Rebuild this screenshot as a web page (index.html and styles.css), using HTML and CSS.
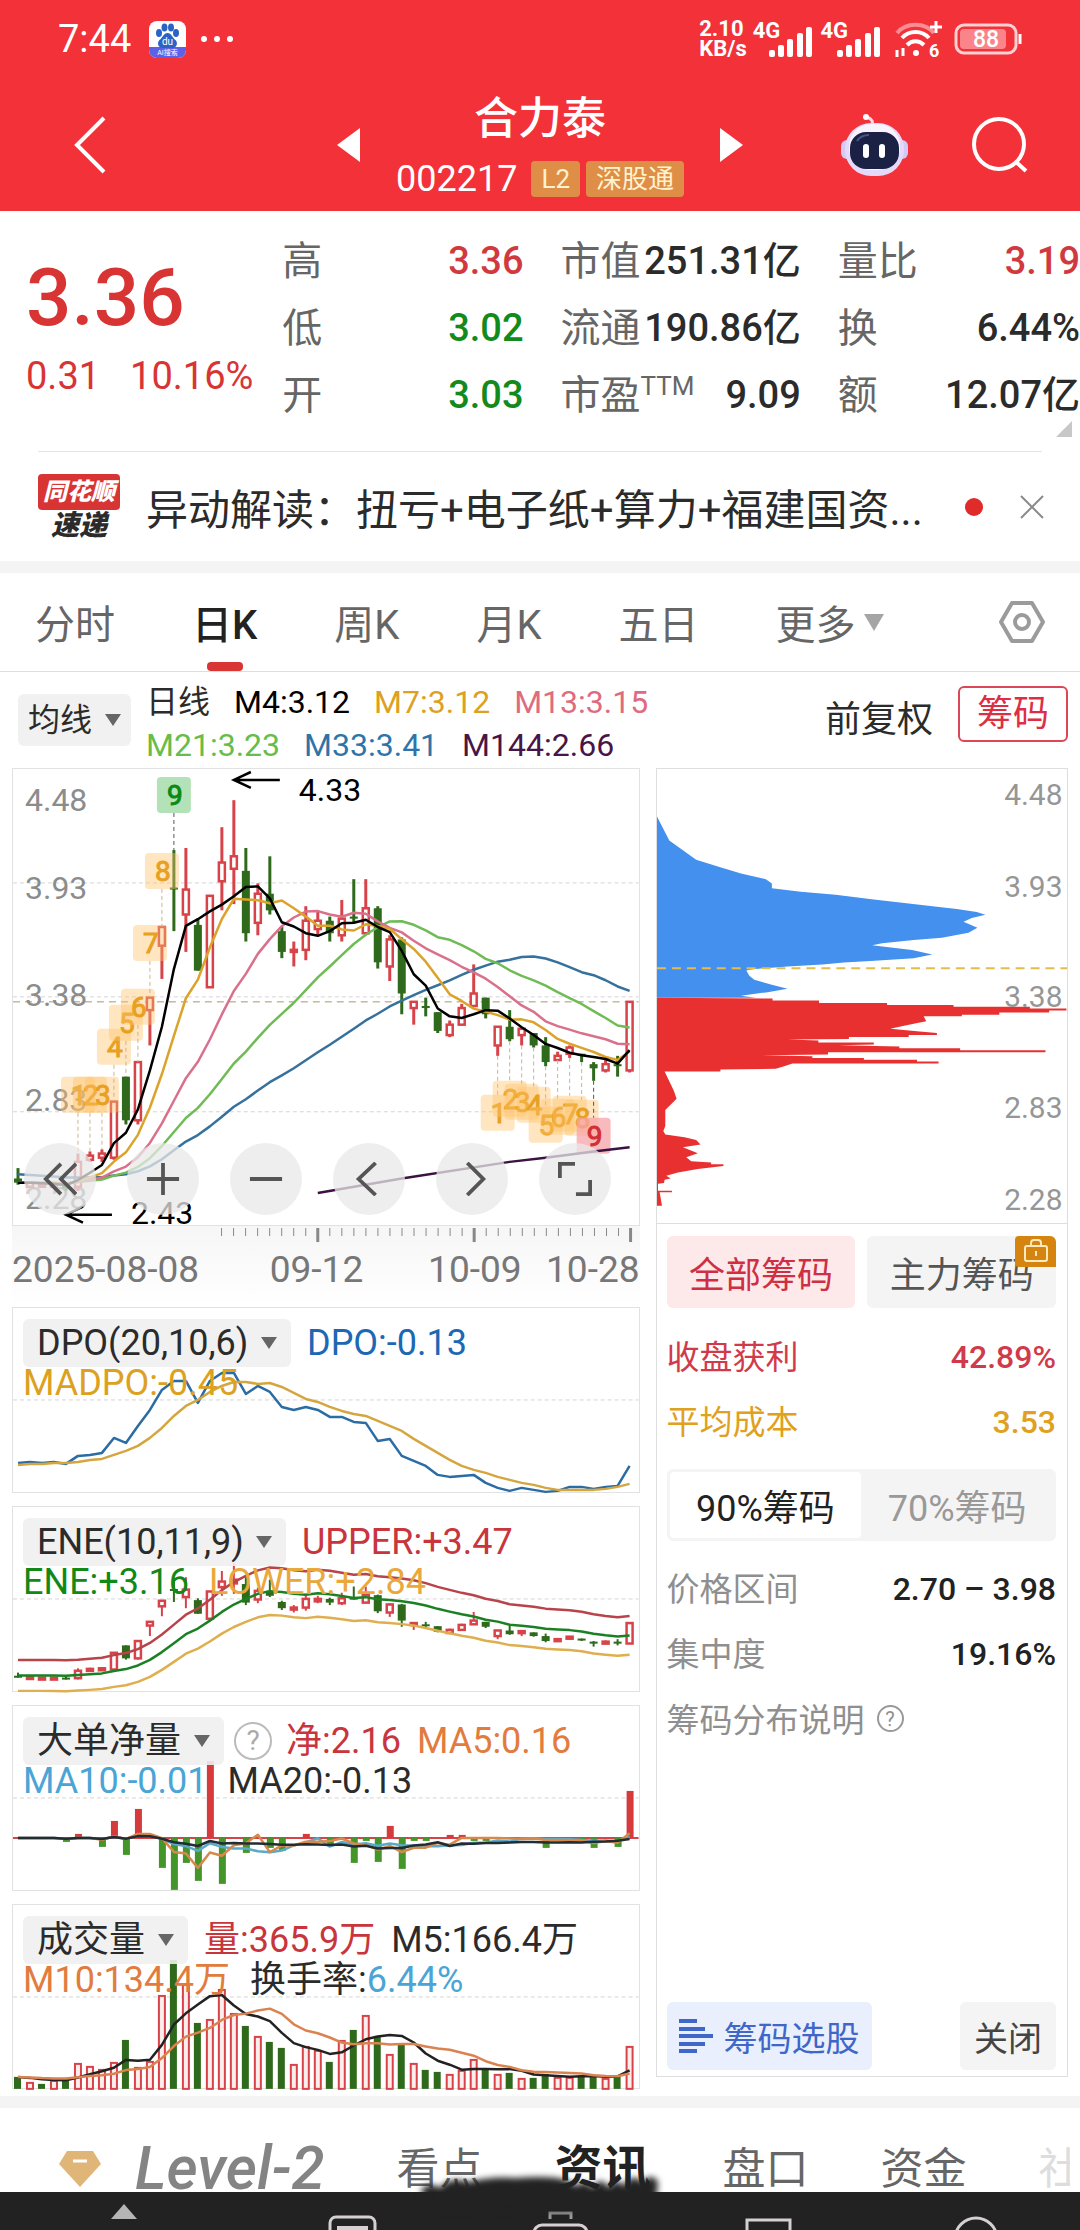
FILE: index.html
```html
<!DOCTYPE html>
<html lang="zh-CN">
<head>
    <meta charset="UTF-8">
    <meta name="viewport" content="width=device-width, initial-scale=1.0">
    <title>合力泰 002217</title>
    <link rel="stylesheet" href="styles.css">
</head>
<body>

<header class="header">
    <div class="status">
        <span class="time">7:44</span>
        <svg class="app-icon" width="37" height="37" viewBox="0 0 37 37">
            <rect width="37" height="37" rx="8" fill="#fff"/>
            <path d="M0 26h37v3a8 8 0 0 1-8 8H8a8 8 0 0 1-8-8z" fill="#5b62e8"/>
            <g fill="#2a63c4">
                <ellipse cx="10" cy="12" rx="3" ry="4"/>
                <ellipse cx="15.500" cy="6.500" rx="3" ry="4"/>
                <ellipse cx="22" cy="6.500" rx="3" ry="4"/>
                <ellipse cx="27" cy="12" rx="3" ry="4"/>
                <path d="M18.500 12c4 0 5 5 8 7 3 3 1 8-3 8h-10c-4 0-6-5-3-8 3-2 4-7 8-7z"/>
            </g>
            <text x="18.500" y="24" font-size="10" fill="#fff" text-anchor="middle">du</text>
            <text x="18.500" y="34" font-size="7" fill="#fff" text-anchor="middle">AI搜索</text>
        </svg>
        <svg width="34" height="8" viewBox="0 0 34 8" fill="#fff"><circle cx="4" cy="4" r="3"/><circle cx="17" cy="4" r="3"/><circle cx="30" cy="4" r="3"/></svg>
        <span class="speed">2.10<br>KB/s</span>
        <span class="signal"><i>4G</i>
            <svg width="46" height="32" viewBox="0 0 46 32" fill="#fff"><rect x="1" y="25" width="6" height="7" rx="2"/><rect x="10" y="20" width="6" height="12" rx="2"/><rect x="19" y="14" width="6" height="18" rx="2"/><rect x="29" y="8" width="6" height="24" rx="2"/><rect x="38" y="2" width="6" height="30" rx="2"/></svg>
        </span>
        <span class="signal"><i>4G</i>
            <svg width="46" height="32" viewBox="0 0 46 32" fill="#fff"><rect x="1" y="25" width="6" height="7" rx="2"/><rect x="10" y="20" width="6" height="12" rx="2"/><rect x="19" y="14" width="6" height="18" rx="2"/><rect x="29" y="8" width="6" height="24" rx="2"/><rect x="38" y="2" width="6" height="30" rx="2"/></svg>
        </span>
        <svg class="wifi" width="48" height="38" viewBox="0 0 48 38" fill="none" stroke="#fff" stroke-width="4">
            <path d="M3 13c9-11 28-11 37 0" opacity=".45"/>
            <path d="M8 18c7-8 20-8 27 0M13 25c5-5 12-5 17 0"/>
            <circle cx="22" cy="33" r="3" fill="#fff" stroke="none"/>
            <path d="M42 1v12M36 7h12" stroke-width="3"/>
            <path d="M3 30v7M9 28v8" stroke-width="3"/>
            <text x="35" y="37" font-size="18" font-weight="700" fill="#fff" stroke="none">6</text>
        </svg>
        <svg width="70" height="32" viewBox="0 0 70 32">
            <rect x="2" y="2" width="60" height="28" rx="8" fill="none" stroke="#fbd0d2" stroke-width="3"/>
            <rect x="6" y="6" width="46" height="20" rx="4" fill="#f9858a"/>
            <path d="M66 11v10" stroke="#fff" stroke-width="3"/>
            <text x="32" y="24" font-size="23" font-weight="500" fill="#fff" text-anchor="middle">88</text>
        </svg>
    </div>
    <nav class="navbar">
        <div class="side">
            <button class="icon-btn" aria-label="返回">
                <svg width="32" height="58" viewBox="0 0 32 58" fill="none" stroke="#fff" stroke-width="4"><path d="M30 2 3 29l27 27"/></svg>
            </button>
        </div>
        <button class="icon-btn" aria-label="上一只"><svg width="23" height="34" viewBox="0 0 23 34"><path d="M23 0v34L0 17z" fill="#fff"/></svg></button>
        <div class="stock">
            <h1>合力泰</h1>
            <p><span>002217</span><em>L2</em><em>深股通</em></p>
        </div>
        <button class="icon-btn" aria-label="下一只"><svg width="23" height="34" viewBox="0 0 23 34"><path d="M0 0v34l23-17z" fill="#fff"/></svg></button>
        <div class="side side-right">
            <button class="icon-btn" aria-label="智能助手">
                <svg width="67" height="64" viewBox="0 0 67 64">
                    <path d="M30 12c3-3 1-6-4-8" fill="none" stroke="#f3d5ee" stroke-width="3"/>
                    <circle cx="25" cy="4" r="3" fill="#fff"/>
                    <rect x="0" y="27" width="12" height="19" rx="6" fill="#d5c8f5"/>
                    <rect x="55" y="27" width="12" height="19" rx="6" fill="#d5c8f5"/>
                    <rect x="4" y="10" width="59" height="53" rx="26" fill="#e5d9fa"/>
                    <rect x="8" y="11" width="51" height="46" rx="22" fill="#f7f3ff"/>
                    <rect x="9" y="19" width="49" height="37" rx="16" fill="#1b2145"/>
                    <path d="M16 28q4-6 12-6" fill="none" stroke="#4a5585" stroke-width="2"/>
                    <rect x="22" y="31" width="6" height="14" rx="3" fill="#fff"/>
                    <rect x="38" y="31" width="6" height="14" rx="3" fill="#fff"/>
                </svg>
            </button>
            <button class="icon-btn" aria-label="搜索">
                <svg width="56" height="56" viewBox="0 0 56 56" fill="none" stroke="#fff" stroke-width="4"><circle cx="27" cy="27" r="25"/><path d="m43 44 11 10"/></svg>
            </button>
        </div>
    </nav>
</header>

<section class="quote">
    <div class="price">
        <strong>3.36</strong>
        <p><span>0.31</span><span>10.16%</span></p>
    </div>
    <dl>
        <div><dt>高</dt><dd class="up">3.36</dd></div>
        <div><dt>低</dt><dd class="down">3.02</dd></div>
        <div><dt>开</dt><dd class="down">3.03</dd></div>
    </dl>
    <dl>
        <div><dt>市值</dt><dd>251.31亿</dd></div>
        <div><dt>流通</dt><dd>190.86亿</dd></div>
        <div><dt>市盈<sup>TTM</sup></dt><dd>9.09</dd></div>
    </dl>
    <dl>
        <div><dt>量比</dt><dd class="up">3.19</dd></div>
        <div><dt>换</dt><dd>6.44%</dd></div>
        <div><dt>额</dt><dd>12.07亿</dd></div>
    </dl>
</section>

<section class="news">
    <div class="news-logo"><b>同花顺</b><i>速递</i></div>
    <a href="#news">异动解读：扭亏+电子纸+算力+福建国资...</a>
    <span class="dot"></span>
    <button class="icon-btn" aria-label="关闭提示">
        <svg width="24" height="24" viewBox="0 0 24 24" stroke="#8a8a8a" stroke-width="2"><path d="m1 1 22 22M23 1 1 23"/></svg>
    </button>
</section>

<nav class="periods">
    <button>分时</button>
    <button class="active">日K</button>
    <button>周K</button>
    <button>月K</button>
    <button>五日</button>
    <button class="more">更多</button>
    <button class="settings" aria-label="设置">
        <svg width="46" height="42" viewBox="0 0 46 42" fill="none" stroke="#9b9b9b" stroke-width="4" stroke-linejoin="round"><path d="M13 2h20l11 19-11 19H13L2 21z"/><circle cx="23" cy="21" r="7"/></svg>
    </button>
</nav>

<div class="averages">
    <label class="picker small"><select aria-label="主图指标"><option>均线</option></select></label>
    <div class="legend">
        <p><span class="c-ink">日线</span><span class="c-black">M4:3.12</span><span class="c-gold">M7:3.12</span><span class="c-pink">M13:3.15</span></p>
        <p><span class="c-lime">M21:3.23</span><span class="c-blue">M33:3.41</span><span class="c-plum">M144:2.66</span></p>
    </div>
    <button class="adjust">前复权</button>
    <button class="chips-toggle">筹码</button>
</div>

<main class="board">
    <div class="charts">
        <div class="panel kline">
            <svg id="kline" viewBox="0 0 626 456"></svg>
            <div class="tools">
                <button aria-label="最左"><svg viewBox="0 0 36 36"><path d="M19 2 3 18l16 16M35 2 19 18l16 16"/></svg></button>
                <button aria-label="放大"><svg viewBox="0 0 36 36"><path d="M18 1v34M1 18h34"/></svg></button>
                <button aria-label="缩小"><svg viewBox="0 0 36 36"><path d="M1 18h34"/></svg></button>
                <button aria-label="左移"><svg viewBox="0 0 36 36"><path d="M25 1 7 18l18 17"/></svg></button>
                <button aria-label="右移"><svg viewBox="0 0 36 36"><path d="m13 1 17 17-17 17"/></svg></button>
                <button aria-label="全屏"><svg viewBox="0 0 36 36"><path d="M2 17V2h16M34 19v15H19"/></svg></button>
            </div>
        </div>
        <svg id="axis" class="axis" viewBox="0 0 626 81"></svg>

        <div class="panel sub">
            <svg id="dpo" viewBox="0 0 626 184"></svg>
            <div class="legend">
                <p><label class="picker"><select aria-label="副图一指标"><option>DPO(20,10,6)</option></select></label><span class="c-azure">DPO:-0.13</span></p>
                <p><span class="c-gold">MADPO:-0.45</span></p>
            </div>
        </div>
        <div class="panel sub">
            <svg id="ene" viewBox="0 0 626 184"></svg>
            <div class="legend">
                <p><label class="picker"><select aria-label="副图二指标"><option>ENE(10,11,9)</option></select></label><span class="c-crimson">UPPER:+3.47</span></p>
                <p><span class="c-green">ENE:+3.16</span><span class="c-amber">LOWER:+2.84</span></p>
            </div>
        </div>
        <div class="panel sub">
            <svg id="net" viewBox="0 0 626 184"></svg>
            <div class="legend">
                <p><label class="picker"><select aria-label="副图三指标"><option>大单净量</option></select></label>
                    <button class="help" aria-label="指标说明">?</button><span class="c-crimson">净:2.16</span><span class="c-orange">MA5:0.16</span></p>
                <p><span class="c-sky">MA10:-0.01</span><span class="c-ink">MA20:-0.13</span></p>
            </div>
        </div>
        <div class="panel sub">
            <svg id="volume" viewBox="0 0 626 184"></svg>
            <div class="legend">
                <p><label class="picker"><select aria-label="副图四指标"><option>成交量</option></select></label><span class="c-crimson">量:365.9万</span><span class="c-ink">M5:166.4万</span></p>
                <p><span class="c-orange">M10:134.4万</span><span class="c-ink">换手率:<b class="c-sky">6.44%</b></span></p>
            </div>
        </div>
    </div>

    <aside class="chips">
        <svg class="distribution" viewBox="0 0 412 456">
            <svg width="412" height="456" viewBox="47 25 1236 1368">
                <path fill="#4490ef" d="M47 168 84 240 165 298 240 322 300 340 375 357 393 370V384L480 395 585 404 700 418 805 430 890 440 950 447 1010 456 1036 464 995 474 970 485 1012 503 985 518 905 533 820 540 725 550 695 556 745 562 815 570 876 584 820 595 690 603 610 608 545 614 440 620 335 628 316 632 325 648 340 660 390 674 440 687 380 697 300 708 345 714H47z"/>
                <path fill="#e83030" d="M47 714 395 716V722H535V730H740V736H940V741H1170V746H1280V752H1228V758H1078V765H965V770H850L858 785 820 792 770 803 750 807 830 815 890 820V826H805V832H625V838L440 840 533 843V849H700V855L595 857 777 861V866H960V872H1217V878H562V885L355 887 515 890V895H670V901H830V906H895V912H455L430 920 405 928 238 930V936H70L98 995 106 1018 72 1052V1100L66 1115 72 1126 130 1134 165 1142 178 1156 125 1164 170 1182 135 1194 150 1206 210 1210V1215H247V1221L170 1230 110 1240 75 1250 88 1258 70 1262 68 1272 50 1274V1295H92V1300H55L62 1340H47z"/>
            </svg>
            <path d="M0 200h412" stroke="#e3bd4c" stroke-width="2" stroke-dasharray="9 6"/>
            <g class="scale">
                <text x="407" y="36">4.48</text>
                <text x="407" y="128">3.93</text>
                <text x="407" y="239">3.38</text>
                <text x="407" y="350">2.83</text>
                <text x="407" y="443">2.28</text>
            </g>
        </svg>
        <div class="chips-body">
            <div class="chip-tabs">
                <button class="active">全部筹码</button>
                <button>主力筹码
                    <span class="lock"><svg width="24" height="24" viewBox="0 0 24 24" fill="none" stroke="#ffe9bd" stroke-width="2"><rect x="1" y="7" width="22" height="15" rx="2"/><path d="M7 7V4q0-3 3-3h4q3 0 3 3v3M12 12v5"/></svg></span>
                </button>
            </div>
            <p class="row c-rose"><span>收盘获利</span><b>42.89%</b></p>
            <p class="row c-yellow"><span>平均成本</span><b>3.53</b></p>
            <div class="segment">
                <button class="active">90%筹码</button>
                <button>70%筹码</button>
            </div>
            <p class="row"><span>价格区间</span><b>2.70 – 3.98</b></p>
            <p class="row"><span>集中度</span><b>19.16%</b></p>
            <a class="explain" href="#chips-help">筹码分布说明<i>?</i></a>
            <div class="chip-actions">
                <button class="pick">
                    <svg width="34" height="34" viewBox="0 0 34 34" stroke="#3f67c9" stroke-width="4"><path d="M0 2h18M0 10h26M0 17h34M0 25h26M0 32h18"/></svg>筹码选股
                </button>
                <button class="close">关闭</button>
            </div>
        </div>
    </aside>
</main>

<nav class="sections">
    <svg width="42" height="36" viewBox="0 0 42 36"><path d="M8 0h26l8 13-21 23L0 13z" fill="#dfb678"/><path d="M14 10h14" stroke="#fff" stroke-width="3"/></svg>
    <a class="level" href="#level2">Level-2</a>
    <a href="#focus">看点</a>
    <a class="active" href="#info">资讯</a>
    <a href="#book">盘口</a>
    <a href="#funds">资金</a>
    <a class="faded" href="#community">社</a>
    <svg class="smudge" viewBox="0 0 250 44" aria-hidden="true"><path d="M4 16Q12 4 24 12 34 0 52 6 76 0 100 2 150-2 160 10q10-8 16 2 10-14 16 0 8-12 16-2 8-14 18-4 10-10 16 0l-2 20q-12 10-20 0-20 10-44 4-30 8-60 2-30 8-50 0-16 8-26 0-14 6-20-4z"/></svg>
</nav>

<footer class="dock">
    <svg viewBox="0 0 1080 38" fill="none" stroke="#d6d0d2" stroke-width="3">
        <path d="m124 12 13 15h-26z" fill="#b5b5b5" stroke="none"/>
        <rect x="330" y="25" width="45" height="40" rx="6"/><path d="M337 36h31" stroke-width="4"/>
        <path d="M550 27v-6h21v6" stroke="#9a9a9a"/><rect x="534" y="33" width="53" height="40" rx="8"/>
        <rect x="747" y="28" width="43" height="40"/>
        <circle cx="976" cy="47" r="21"/>
    </svg>
</footer>

<script src="charts.js"></script>
</body>
</html>
```

FILE: styles.css
```css
* {
    box-sizing: border-box;
}

body {
    margin: 0;
    background: #fff;
    color: #2b2b2b;
    font-family: Roboto, "Noto Sans CJK SC", sans-serif;
    font-size: 32px;
    overflow-x: hidden;
}

h1, p, dl, dd {
    margin: 0;
}

button, select {
    margin: 0;
    padding: 0;
    border: none;
    background: none;
    color: inherit;
    font: inherit;
    cursor: pointer;
}

a {
    color: inherit;
    text-decoration: none;
}

i, em {
    font-style: normal;
}

svg {
    display: block;
}

.icon-btn {
    display: block;
    flex: none;
}

/* header */
.header {
    background: #f23139;
    color: #fff;
}

.status {
    display: flex;
    align-items: center;
    height: 78px;
    padding: 0 56px 0 58px;
}

.time {
    font-size: 38px;
    margin-right: 18px;
}

.app-icon {
    margin-right: 14px;
}

.speed {
    margin-left: auto;
    font-size: 22px;
    line-height: 20px;
    font-weight: 700;
}

.signal {
    display: flex;
    align-items: flex-end;
    height: 36px;
    margin-left: 6px;
}

.signal i {
    align-self: flex-start;
    font-size: 22px;
    line-height: 20px;
    font-weight: 700;
    margin-right: -12px;
}

.wifi {
    margin: 0 12px;
}

.navbar {
    display: flex;
    align-items: center;
    height: 133px;
    gap: 36px;
}

.side {
    flex: 1 1 240px;
    padding-left: 74px;
}

.side-right {
    display: flex;
    align-items: center;
    justify-content: flex-end;
    gap: 64px;
    padding: 0 52px 0 0;
}

.stock {
    text-align: center;
}

.stock h1 {
    font-size: 44px;
    line-height: 52px;
    font-weight: 500;
    margin-bottom: 16px;
}

.stock p {
    display: flex;
    align-items: center;
    gap: 6px;
    font-size: 36px;
    line-height: 36px;
}

.stock span {
    margin-right: 8px;
}

.stock em {
    padding: 0 10px;
    border-radius: 4px;
    background: #de8e46;
    color: #fff3d0;
    font-size: 26px;
}

/* quote */
.quote {
    position: relative;
    display: grid;
    grid-template-columns: minmax(0, 219fr) minmax(0, 241fr) minmax(0, 240fr) minmax(0, 242fr);
    column-gap: 37px;
    padding: 17px 0 23px 26px;
    white-space: nowrap;
}

.quote::before {
    content: "";
    position: absolute;
    right: 38px;
    bottom: 0;
    left: 38px;
    height: 1px;
    background: #e4e4e4;
}

.quote::after {
    content: "";
    position: absolute;
    right: 8px;
    bottom: 15px;
    border: 8px solid #c8c8c8;
    border-top-color: transparent;
    border-left-color: transparent;
}

.price {
    color: #d93434;
    padding-top: 22px;
}

.price strong {
    display: block;
    font-size: 80px;
    line-height: 96px;
    font-weight: 500;
}

.price p {
    display: flex;
    gap: 30px;
    font-size: 38px;
    line-height: 60px;
}

.quote dl div {
    display: flex;
    justify-content: space-between;
    height: 67px;
    line-height: 67px;
}

.quote dt {
    color: #666;
    font-size: 40px;
}

.quote dd {
    font-size: 38px;
    font-weight: 500;
}

.quote sup {
    font-size: 26px;
    line-height: 26px;
}

.quote .up {
    color: #d03a3e;
}

.quote .down {
    color: #138a1c;
}

/* news */
.news {
    display: flex;
    align-items: center;
    height: 109px;
    padding: 0 36px 0 38px;
}

.news a {
    flex: 1;
    min-width: 0;
    margin-left: 26px;
    font-size: 42px;
    white-space: nowrap;
}

.news-logo {
    width: 82px;
    text-align: center;
    font-weight: 900;
    line-height: 28px;
}

.news-logo b {
    display: block;
    padding: 4px 0;
    border-radius: 4px;
    background: #d93434;
    color: #fff;
    font-size: 24px;
    font-style: italic;
}

.news-logo i {
    font-size: 28px;
    font-style: italic;
}

.dot {
    width: 18px;
    height: 18px;
    margin: 0 37px 0 20px;
    border-radius: 50%;
    background: #e02b2b;
}

/* period tabs */
.periods {
    display: flex;
    align-items: center;
    gap: 77px;
    height: 111px;
    padding: 0 35px;
    border-top: 12px solid #f4f4f4;
    border-bottom: 1px solid #dedede;
    color: #666;
    font-size: 40px;
}

.periods button {
    position: relative;
    flex: none;
    height: 98px;
}

.periods .active {
    color: #222;
    font-weight: 500;
}

.periods .active::after {
    content: "";
    position: absolute;
    bottom: 0;
    left: 50%;
    width: 36px;
    height: 9px;
    margin-left: -18px;
    border-radius: 4px;
    background: #da3535;
}

.more {
    display: flex;
    align-items: center;
    gap: 8px;
}

.more::after {
    content: "";
    border: 10px solid transparent;
    border-top: 17px solid #a5a5a5;
    border-bottom: none;
}

.periods .settings {
    margin-left: auto;
}

/* moving average bar */
.averages {
    display: flex;
    align-items: center;
    height: 96px;
    padding: 0 12px 0 18px;
}

.averages .legend {
    margin: 8px 0 0 15px;
}

.averages p {
    line-height: 43px;
}

.legend p {
    display: flex;
    align-items: center;
    gap: 24px;
    white-space: nowrap;
}

.adjust {
    margin: -8px 0 0 auto;
    font-size: 36px;
}

.chips-toggle {
    width: 110px;
    height: 56px;
    margin: -12px 0 0 25px;
    border: 2px solid #dd4656;
    border-radius: 6px;
    color: #dd2e44;
    font-size: 36px;
    line-height: 50px;
}

.picker {
    display: flex;
    align-items: center;
    height: 48px;
    padding: 0 14px;
    border-radius: 6px;
    background: rgba(240, 240, 240, 0.9);
}

.picker select {
    appearance: none;
    outline: none;
}

.picker::after {
    content: "";
    margin-left: 12px;
    border: 8px solid transparent;
    border-top: 12px solid #666;
    border-bottom: none;
}

.picker.small {
    height: 52px;
    padding: 0 10px;
}

/* charts */
.board {
    display: grid;
    grid-template-columns: 627fr 412fr;
    gap: 16px;
    padding: 0 12px 7px;
}

.panel {
    position: relative;
    border: 1px solid #e2e2e2;
}

.panel > svg,
.axis {
    width: 100%;
    overflow: visible;
}

.axis {
    background: linear-gradient(#f6f6f6, #fff);
}

.sub + .sub {
    margin-top: 13px;
}

.sub .legend {
    position: absolute;
    top: 11px;
    left: 10px;
    font-size: 36px;
    line-height: 40px;
}

.sub .legend p {
    height: 48px;
    gap: 16px;
}

.sub .legend p + p {
    height: 32px;
    gap: 20px;
}

.legend b {
    font-weight: 400;
}

.tools {
    position: absolute;
    right: 0;
    bottom: 10px;
    left: 11px;
    display: flex;
    gap: 31px;
}

.tools button {
    display: flex;
    align-items: center;
    justify-content: center;
    width: 72px;
    height: 72px;
    border-radius: 50%;
    background: rgba(232, 232, 232, 0.75);
}

.tools svg {
    width: 34px;
    fill: none;
    stroke: #555;
    stroke-width: 4;
}

.help {
    width: 38px;
    height: 38px;
    margin: 0 -2px 0 -6px;
    border: 2px solid #bbb;
    border-radius: 50%;
    color: #aaa;
    font-size: 28px;
    line-height: 32px;
}

.scale text {
    fill: #969696;
    font-size: 30px;
    text-anchor: end;
}

.labels text {
    fill: #8c8c8c;
    font-size: 32px;
}

.dates text {
    fill: #777;
    font-size: 37px;
}

.tag-text {
    font-size: 28px;
    text-anchor: middle;
}

/* chip distribution */
.chips {
    display: flex;
    flex-direction: column;
    margin-bottom: 12px;
    border: 1px solid #dedede;
    color: #222;
}

.distribution {
    width: 100%;
    border-bottom: 1px solid #dedede;
}

.chips-body {
    flex: 1;
    display: flex;
    flex-direction: column;
    padding: 12px 11px 6px 10px;
}

.chip-tabs {
    display: flex;
    gap: 12px;
    margin-bottom: 17px;
}

.chip-tabs button {
    position: relative;
    flex: 1;
    height: 72px;
    border-radius: 6px;
    background: #f4f4f4;
    color: #555;
    font-size: 36px;
    white-space: nowrap;
}

.chip-tabs .active {
    background: #fde8ea;
    color: #cf2f43;
}

.lock {
    position: absolute;
    top: 0;
    right: 0;
    padding: 3px 8px 4px 9px;
    border-radius: 4px 6px 0 4px;
    background: #d5850f;
}

.row {
    display: flex;
    justify-content: space-between;
    line-height: 65px;
}

.row span {
    color: #8f8f8f;
    font-size: 33px;
}

.row b {
    font-weight: 500;
}

.c-rose, .c-rose span {
    color: #d13a4a;
}

.c-yellow, .c-yellow span {
    color: #e0a020;
}

.segment {
    display: flex;
    height: 72px;
    margin: 14px 0 16px;
    padding: 3px;
    border-radius: 6px;
    background: #f4f4f4;
    color: #999;
    font-size: 36px;
}

.segment button {
    flex: 1;
    border-radius: 4px;
}

.segment .active {
    background: #fff;
    color: #222;
}

.explain {
    display: flex;
    align-items: center;
    gap: 12px;
    height: 62px;
    color: #8f8f8f;
    font-size: 33px;
}

.explain i {
    width: 27px;
    height: 27px;
    border: 2px solid #999;
    border-radius: 50%;
    font-size: 20px;
    line-height: 24px;
    text-align: center;
}

.chip-actions {
    display: flex;
    justify-content: space-between;
    margin-top: auto;
}

.chip-actions button {
    height: 68px;
    border-radius: 6px;
    font-size: 34px;
}

.pick {
    display: flex;
    align-items: center;
    gap: 11px;
    padding: 0 12px;
    background: #e9effc;
    color: #3f67c9;
}

.close {
    padding: 0 14px;
    background: #f4f4f4;
    color: #444;
}

/* bottom sections */
.sections {
    position: relative;
    z-index: 1;
    display: flex;
    align-items: center;
    gap: 72px;
    height: 96px;
    padding: 38px 0 0 59px;
    border-top: 12px solid #f4f4f4;
    color: #666;
    font-size: 43px;
    line-height: 46px;
    white-space: nowrap;
}

.sections > * {
    flex: none;
}

.sections .level {
    margin-left: -38px;
    color: #848484;
    font-size: 60px;
    font-style: italic;
    font-weight: 500;
}

.sections .active {
    color: #222;
    font-size: 48px;
    font-weight: 700;
}

.sections .faded {
    width: 31px;
    color: #ddd;
    overflow: hidden;
}

.smudge {
    position: absolute;
    bottom: -28px;
    left: 416px;
    width: 250px;
    fill: #222;
    filter: blur(3px);
}

.dock {
    background: #222;
    overflow: hidden;
}

.dock svg {
    width: 100%;
}

/* series colours */
.c-ink { color: #2b2b2b; }
.c-black { color: #000; }
.c-gold { color: #dca11f; }
.c-pink { color: #df6b80; }
.c-lime { color: #67bd48; }
.c-blue { color: #2f74a8; }
.c-plum { color: #471547; }
.c-azure { color: #1c68b4; }
.c-crimson { color: #c9353d; }
.c-green { color: #128817; }
.c-amber { color: #e9a83c; }
.c-orange { color: #e27b3e; }
.c-sky { color: #4aa5d6; }
```

FILE: charts.js
```js
// open, close, high, low
const candles = [
    [2.51, 2.49, 2.56, 2.48], [2.47, 2.49, 2.49, 2.47], [2.48, 2.48, 2.49, 2.47], [2.47, 2.48, 2.49, 2.47],
    [2.48, 2.46, 2.49, 2.45], [2.47, 2.59, 2.63, 2.45], [2.60, 2.62, 2.64, 2.59], [2.61, 2.63, 2.65, 2.59],
    [2.61, 2.88, 2.88, 2.60], [3.00, 2.79, 3.00, 2.77], [2.79, 3.07, 3.07, 2.77], [3.32, 3.38, 3.38, 3.15],
    [3.63, 3.72, 3.72, 3.47], [3.91, 3.90, 4.09, 3.70], [3.78, 3.90, 4.10, 3.60], [3.73, 3.51, 3.76, 3.51],
    [3.43, 3.87, 3.87, 3.43], [3.94, 4.03, 4.20, 3.80], [4.00, 4.06, 4.33, 3.83], [3.99, 3.69, 4.10, 3.65],
    [3.74, 3.88, 3.93, 3.68], [3.88, 3.80, 4.06, 3.78], [3.70, 3.60, 3.72, 3.57], [3.60, 3.61, 3.65, 3.53],
    [3.61, 3.75, 3.82, 3.56], [3.71, 3.75, 3.80, 3.68], [3.75, 3.69, 3.77, 3.65], [3.68, 3.76, 3.85, 3.65],
    [3.77, 3.76, 3.95, 3.74], [3.69, 3.81, 3.95, 3.69], [3.81, 3.55, 3.82, 3.52], [3.53, 3.66, 3.68, 3.46],
    [3.66, 3.40, 3.67, 3.30], [3.33, 3.36, 3.36, 3.25], [3.34, 3.33, 3.38, 3.29], [3.31, 3.22, 3.31, 3.21],
    [3.20, 3.25, 3.27, 3.19], [3.25, 3.33, 3.35, 3.25], [3.34, 3.40, 3.54, 3.34], [3.38, 3.30, 3.38, 3.28],
    [3.15, 3.24, 3.24, 3.10], [3.24, 3.18, 3.32, 3.17], [3.20, 3.23, 3.23, 3.15], [3.21, 3.15, 3.21, 3.14],
    [3.15, 3.07, 3.19, 3.05], [3.08, 3.10, 3.12, 3.08], [3.11, 3.14, 3.15, 3.09], [3.11, 3.10, 3.11, 3.07],
    [3.06, 3.04, 3.07, 2.98], [3.03, 3.06, 3.08, 3.02], [3.06, 3.05, 3.10, 3.00], [3.03, 3.36, 3.36, 3.02]
];

// closes before the first visible day, only used by the averages
const history = Array(14).fill(2.6).concat(Array(20).fill(2.49));

const volumes = [12, 7, 5, 9, 10, 26, 23, 20, 27, 49, 22, 28, 94, 129, 105, 66, 70, 100, 76, 63, 53, 47, 41, 25, 43, 39,
    27, 49, 59, 74, 53, 35, 44, 26, 19, 17, 15, 19, 30, 19, 15, 16, 11, 11, 15, 12, 12, 13, 13, 11, 13, 43];

const netFlow = [0, 0, 0, 0, -4, 4, 0, -9, 17, -17, 29, 0, -30, -52, -25, -43, 77, -46, 0, -15, 0, -10, -13, 0, 4, 0,
    -7, 0, -25, -3, -24, 12, -31, -3, -3, 0, 3, 3, -3, -3, 0, 0, 0, 0, -10, 0, 0, -5, -10, 0, -9, 47];

const dpo = [155, 154, 155, 154, 156, 148, 147, 145, 130, 135, 118, 102, 82, 73, 73, 95, 73, 65, 65, 86, 78, 84, 99,
    102, 99, 102, 109, 109, 114, 115, 133, 131, 148, 153, 158, 167, 169, 168, 167, 175, 180, 183, 180, 182, 184, 183,
    179, 179, 181, 179, 178, 158];

const madpo = [157, 156, 156, 155, 155, 154, 152, 151, 147, 143, 138, 130, 120, 108, 98, 92, 84, 78, 74, 74, 76, 75, 79,
    85, 91, 94, 99, 103, 106, 108, 113, 118, 123, 131, 138, 145, 152, 158, 162, 165, 169, 172, 175, 177, 180, 182,
    182, 182, 182, 181, 179, 176];

const RED = '#d8434a';
const GREEN = '#2f6a1c';

const x = i => 5 + i * 12;
const priceY = p => (4.48 - p) * 208;
const closes = candles.map(c => c[1]);

function average(values, n, before = []) {
    const all = before.concat(values);
    return values.map((_, i) => {
        const end = before.length + i + 1;
        const part = all.slice(Math.max(0, end - n), end);
        return part.reduce((a, b) => a + b, 0) / part.length;
    });
}

function line(values, color, toY = v => v) {
    const points = values.map((v, i) => `${x(i)},${toY(v).toFixed(1)}`).join(' ');
    return `<polyline points="${points}" fill="none" stroke="${color}" stroke-width="2.500" stroke-linejoin="round"/>`;
}

function hline(y, color = '#d5d5d5', dash = '4 3') {
    return `<path d="M0 ${y}H626" stroke="${color}" stroke-dasharray="${dash}"/>`;
}

function drawCandles(toY, wick) {
    return candles.map(([open, close, high, low], i) => {
        const up = close >= open;
        const top = toY(Math.max(open, close));
        const height = Math.max(2, toY(Math.min(open, close)) - top);
        const color = up ? RED : GREEN;
        const body = up
            ? `<rect x="${x(i) - 3}" y="${top}" width="6" height="${height}" fill="#fff" stroke="${RED}" stroke-width="2.500"/>`
            : `<rect x="${x(i) - 4}" y="${top}" width="8" height="${height}" fill="${GREEN}"/>`;
        return `<path d="M${x(i)} ${toY(high)}V${toY(low)}" stroke="${color}" stroke-width="${wick}"/>${body}`;
    }).join('');
}

// numbered turn signals: day, number, top of the tag
function drawTags(tags, above) {
    return tags.map(([day, n, top]) => {
        const last = n === 9;
        const fill = last ? (above ? '#9bd8a0' : '#f7a3a8') : '#ffc46b';
        const ink = last ? (above ? '#0b8a14' : '#d22f35') : '#e8a020';
        const edge = priceY(candles[day][above ? 2 : 3]);
        const from = above ? top + 36 : edge;
        const to = above ? edge : top;
        return `<path d="M${x(day)} ${from}V${to}" stroke="${last ? '#555' : '#cbb58a'}" stroke-width="1" stroke-dasharray="4 3"/>
            <rect x="${x(day) - 17}" y="${top}" width="34" height="36" rx="4" fill="${fill}" opacity="${last ? .75 : .42}"/>
            <text class="tag-text" x="${x(day) + 1}" y="${top + 28}" fill="${ink}" stroke="${ink}">${n}</text>`;
    }).join('');
}

function arrow(left, y) {
    return `<path d="M${left + 17} ${y - 8}L${left} ${y}l17 8M${left} ${y}h46" fill="none" stroke="#000" stroke-width="2.500"/>`;
}

function draw(id, parts) {
    document.getElementById(id).innerHTML = parts.join('');
}

const longAverage = [[25, 2.44], [32, 2.51], [41, 2.59], [44, 2.61], [48, 2.64], [51, 2.66]]
    .map(([i, p]) => `${x(i)},${priceY(p)}`).join(' ');

draw('kline', [
    hline(114), hline(228), hline(343), hline(233, '#a5986a', '7 5'),
    `<g class="labels"><text x="12" y="42">4.48</text><text x="12" y="130">3.93</text><text x="12" y="237">3.38</text>
        <text x="12" y="342">2.83</text><text x="12" y="440">2.28</text></g>`,
    drawCandles(priceY, 3),
    drawTags([[5, 1, 308], [6, 2, 308], [7, 3, 308], [8, 4, 260], [9, 5, 236], [10, 6, 220], [11, 7, 156], [12, 8, 84], [13, 9, 8]], true),
    drawTags([[40, 1, 326], [41, 2, 312], [42, 3, 315], [43, 4, 318], [44, 5, 338], [45, 6, 330], [46, 7, 327], [47, 8, 331], [48, 9, 349]], false),
    line(average(closes, 33, history), '#35719c', priceY),
    line(average(closes, 21, history), '#6fbb55', priceY),
    line(average(closes, 13, history), '#d9708c', priceY),
    line(average(closes, 7, history), '#dba32c', priceY),
    line(average(closes, 4, history), '#000', priceY),
    `<polyline points="${longAverage}" fill="none" stroke="#3c1240" stroke-width="2.500"/>`,
    arrow(221, 11), '<text x="286" y="32" font-size="32">4.33</text>',
    arrow(53, 446), '<text x="118" y="455" font-size="32">2.43</text>'
]);

const ticks = candles.map((_, i) => {
    if (i < 17) return '';
    const major = i === 25 || i === 38 || i === 51;
    return `<path d="M${x(i)} 2v${major ? 14 : 8}" stroke="#888" stroke-width="${major ? 3 : 1}"/>`;
}).join('');

draw('axis', [ticks, `<g class="dates">
    <text x="0" y="56">2025-08-08</text>
    <text x="257" y="56">09-12</text>
    <text x="415" y="56">10-09</text>
    <text x="626" y="56" text-anchor="end">10-28</text></g>`]);

draw('dpo', [hline(92), line(dpo, '#2a6ca3'), line(madpo, '#d5a640')]);

const eneY = p => 56 + (4.33 - p) * 62;
const middle = average(closes, 10, history);
draw('ene', [
    hline(92),
    drawCandles(eneY, 2),
    line(middle.map(v => v * 1.11), '#b8434b', eneY),
    line(middle.map(v => v * 1.01), '#1a8023', eneY),
    line(middle.map(v => v * 0.91), '#dfae4e', eneY)
]);

const zero = 132;
draw('net', [
    hline(92),
    `<path d="M0 ${zero}H626" stroke="${RED}" stroke-width="2"/>`,
    netFlow.map((v, i) => `<rect x="${x(i) - 3}" y="${v > 0 ? zero - v : zero}" width="7" height="${Math.abs(v)}" fill="${v > 0 ? '#d53a3c' : '#45962a'}"/>`).join(''),
    line(average(netFlow, 10), '#5aa9cb', v => zero - v),
    line(average(netFlow, 5), '#d58a4c', v => zero - v),
    line(average(netFlow, 20), '#222c33', v => zero - v)
]);

draw('volume', [
    hline(92),
    volumes.map((v, i) => candles[i][1] > candles[i][0]
        ? `<rect x="${x(i) - 3}" y="${185 - v}" width="6" height="${v - 1}" fill="#fdeeee" stroke="${RED}" stroke-width="2"/>`
        : `<rect x="${x(i) - 4}" y="${184 - v}" width="7" height="${v}" fill="${GREEN}"/>`).join(''),
    line(average(volumes, 5, [12, 12, 12, 12]), '#222', v => 184 - v),
    line(average(volumes, 10, Array(9).fill(12)), '#da8350', v => 184 - v)
]);
```
